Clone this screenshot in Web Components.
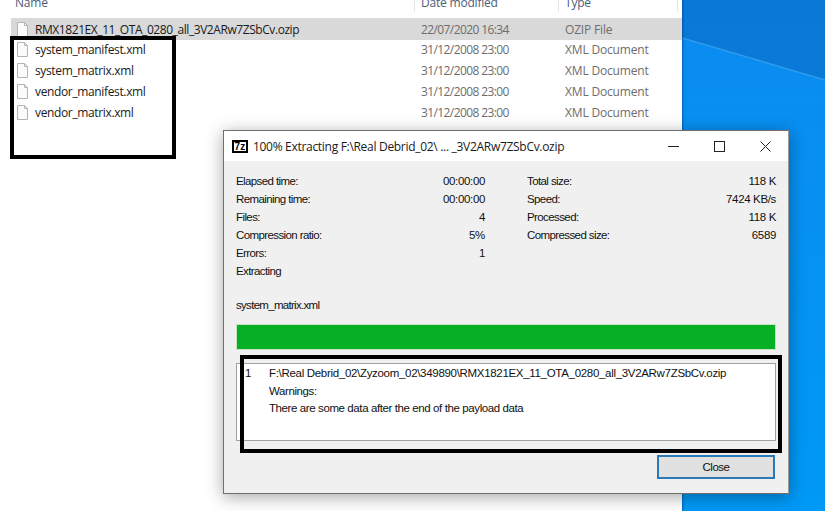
<!DOCTYPE html>
<html>
<head>
<meta charset="utf-8">
<title>Extracting</title>
<style>
html, body { margin: 0; padding: 0; background: #0078d7; }
</style>
</head>
<body>
<win-desktop>
  <explorer-list>
    <file-row name="RMX1821EX_11_OTA_0280_all_3V2ARw7ZSbCv.ozip" date="22/07/2020 16:34" type="OZIP File" selected></file-row>
    <file-row name="system_manifest.xml" date="31/12/2008 23:00" type="XML Document"></file-row>
    <file-row name="system_matrix.xml" date="31/12/2008 23:00" type="XML Document"></file-row>
    <file-row name="vendor_manifest.xml" date="31/12/2008 23:00" type="XML Document"></file-row>
    <file-row name="vendor_matrix.xml" date="31/12/2008 23:00" type="XML Document"></file-row>
  </explorer-list>
  <mark-box style="left:10px;top:36px;width:166px;height:123px"></mark-box>
  <zip-dialog>
    <stat-row slot="left" label="Elapsed time:" value="00:00:00"></stat-row>
    <stat-row slot="left" label="Remaining time:" value="00:00:00"></stat-row>
    <stat-row slot="left" label="Files:" value="4"></stat-row>
    <stat-row slot="left" label="Compression ratio:" value="5%"></stat-row>
    <stat-row slot="left" label="Errors:" value="1"></stat-row>
    <stat-row slot="left" label="Extracting" value=""></stat-row>
    <stat-row slot="right" label="Total size:" value="118 K"></stat-row>
    <stat-row slot="right" label="Speed:" value="7424 KB/s"></stat-row>
    <stat-row slot="right" label="Processed:" value="118 K"></stat-row>
    <stat-row slot="right" label="Compressed size:" value="6589"></stat-row>
  </zip-dialog>
  <mark-box style="left:240px;top:355px;width:542px;height:98px"></mark-box>
</win-desktop>

<script>
const UI_FONT = '"Open Sans", "Noto Sans", sans-serif';
const DLG_FONT = '"Liberation Sans", Arial, sans-serif';

class WinDesktop extends HTMLElement {
  constructor() {
    super();
    this.attachShadow({ mode: "open" });
    this.shadowRoot.innerHTML = `
      <style>
      :host {
        display: block;
        position: relative;
        width: 825px;
        height: 511px;
        overflow: hidden;
        background: linear-gradient(180deg, #0a78d6 0%, #0880e0 100%);
      }
      svg { position: absolute; left: 682px; top: 0; }
      </style>
      <svg width="143" height="511" viewBox="0 0 143 511">
        <defs>
          <linearGradient id="lower" x1="0" y1="0" x2="0" y2="1">
            <stop offset="0" stop-color="#0a8cf0"/>
            <stop offset="1" stop-color="#0099f6"/>
          </linearGradient>
        </defs>
        <polygon points="0,38 143,80 143,511 0,511" fill="url(#lower)"/>
        <line x1="0" y1="38" x2="143" y2="80" stroke="#2f9cec" stroke-width="1.4"/>
      </svg>
      <slot></slot>
    `;
  }
}

class ExplorerList extends HTMLElement {
  constructor() {
    super();
    this.attachShadow({ mode: "open" });
    this.shadowRoot.innerHTML = `
      <style>
      :host {
        display: block;
        position: absolute;
        left: 0;
        top: 0;
        width: 682px;
        height: 511px;
        background: #fff;
        box-shadow: 1px 0 2px rgba(0,40,90,.45);
        font: 12px ${UI_FONT};
      }
      .head {
        display: grid;
        grid-template-columns: 415px 144px 119px;
        height: 18px;
        box-sizing: border-box;
        color: #4c607a;
      }
      .head span {
        height: 12px;
        line-height: 6px;
        padding-left: 6px;
        border-right: 1px solid #e5e5e5;
        letter-spacing: -.2px;
      }
      .head span:first-child { padding-left: 15px; }
      </style>
      <div class="head"><span>Name</span><span>Date modified</span><span>Type</span></div>
      <slot></slot>
    `;
  }
}

class FileRow extends HTMLElement {
  constructor() {
    super();
    this.attachShadow({ mode: "open" });
    this.shadowRoot.innerHTML = `
      <style>
      :host {
        display: grid;
        grid-template-columns: 404px 144px 1fr;
        align-items: center;
        height: 21px;
        margin-left: 11px;
      }
      :host([selected]) { background: #d9d9d9; height: 22px; margin-bottom: -1px; }
      :host([selected]) .name { letter-spacing: -.43px; }
      .name { display: flex; align-items: center; gap: 7px; padding-left: 6px; color: #1a1a1a; letter-spacing: -.36px; }
      .muted { color: #6d6d6d; padding-left: 6px; letter-spacing: -.17px; }
      .date { letter-spacing: -.6px; }
      svg { flex: none; }
      </style>
      <div class="name">
        <svg width="11" height="15" viewBox="0 0 11 15">
          <path d="M.5.5h7l3 3v11H.5z" fill="#fbfbfb" stroke="#b4b4b4"/>
          <path d="M7.5.5v3h3" fill="none" stroke="#b4b4b4"/>
        </svg>
        <span id="n"></span>
      </div>
      <div class="muted date" id="d"></div>
      <div class="muted" id="t"></div>
    `;
    this.shadowRoot.querySelector("#n").textContent = this.getAttribute("name");
    this.shadowRoot.querySelector("#d").textContent = this.getAttribute("date");
    this.shadowRoot.querySelector("#t").textContent = this.getAttribute("type");
  }
}

class StatRow extends HTMLElement {
  constructor() {
    super();
    this.attachShadow({ mode: "open" });
    this.shadowRoot.innerHTML = `
      <style>
      :host {
        display: flex;
        justify-content: space-between;
        height: 18px;
        line-height: 18px;
      }
      #v { letter-spacing: -.35px; }
      </style>
      <span id="l"></span><span id="v"></span>
    `;
    this.shadowRoot.querySelector("#l").textContent = this.getAttribute("label");
    this.shadowRoot.querySelector("#v").textContent = this.getAttribute("value");
  }
}

const dialogTemplate = document.createElement("template");
dialogTemplate.innerHTML = `
  <style>
  :host {
    display: block;
    position: absolute;
    left: 223px;
    top: 130px;
    width: 566px;
    height: 364px;
    box-sizing: border-box;
    border: 1px solid #6f6f6f;
    border-right-color: #9a9a9a;
    background: #f0f0f0;
    box-shadow: 0 3px 16px rgba(0,0,0,.35);
    font: 11.5px ${DLG_FONT};
    letter-spacing: -.4px;
    color: #111;
  }
  .title {
    display: flex;
    align-items: center;
    height: 30px;
    background: #fff;
    padding-left: 8px;
    font: 12px ${UI_FONT};
    letter-spacing: -.3px;
    color: #1a1a1a;
  }
  .logo {
    width: 16px;
    height: 13px;
    box-sizing: border-box;
    border: 2px solid #000;
    margin-right: 5px;
    background: #fff;
    color: #000;
    text-align: center;
    font: bold 10px/9px "Liberation Sans", sans-serif;
    letter-spacing: .3px;
  }
  .caption { flex: 1; }
  .controls { display: flex; align-items: center; gap: 35px; padding-right: 17px; }
  .body { padding: 11px 12px 0 12px; }
  .stats { display: grid; grid-template-columns: 249px 249px; column-gap: 42px; height: 124px; letter-spacing: -.6px; }
  .current { height: 18px; line-height: 18px; letter-spacing: -.7px; }
  .bar {
    height: 26px;
    margin-top: 10px;
    box-sizing: border-box;
    border: 1px solid #c6e3c6;
    background: #06b025;
  }
  .log {
    height: 78px;
    margin-top: 13px;
    box-sizing: border-box;
    border: 1px solid #a0a0a0;
    background: #fff;
    padding: 1px 0 0 8px;
    display: grid;
    grid-template-columns: 24px 1fr;
    grid-auto-rows: 17.5px;
    line-height: 17.5px;
  }
  .path { letter-spacing: -.31px; }
  .foot { display: flex; justify-content: flex-end; padding-top: 14px; }
  button {
    width: 118px;
    height: 24px;
    margin-right: 1px;
    box-sizing: border-box;
    border: 2px solid #2b78b4;
    background: #e1e1e1;
    font: inherit;
    letter-spacing: -.5px;
    color: #111;
    padding: 0 0 1px;
  }
  </style>
  <div class="title">
    <div class="logo">7z</div>
    <div class="caption">100% Extracting F:\\Real Debrid_02\\ ... _3V2ARw7ZSbCv.ozip</div>
    <div class="controls">
      <svg width="11" height="11" viewBox="0 0 11 11"><path d="M0 5.5h11" stroke="#222"/></svg>
      <svg width="11" height="11" viewBox="0 0 11 11"><rect x=".5" y=".5" width="10" height="10" fill="none" stroke="#222"/></svg>
      <svg width="11" height="11" viewBox="0 0 11 11"><path d="M.5.5l10 10M10.5.5l-10 10" stroke="#222" fill="none"/></svg>
    </div>
  </div>
  <div class="body">
    <div class="stats">
      <div><slot name="left"></slot></div>
      <div><slot name="right"></slot></div>
    </div>
    <div class="current">system_matrix.xml</div>
    <div class="bar"></div>
    <div class="log">
      <span>1</span><span class="path">F:\\Real Debrid_02\\Zyzoom_02\\349890\\RMX1821EX_11_OTA_0280_all_3V2ARw7ZSbCv.ozip</span>
      <span></span><span>Warnings:</span>
      <span></span><span>There are some data after the end of the payload data</span>
    </div>
    <div class="foot"><button>Close</button></div>
  </div>
`;

class ZipDialog extends HTMLElement {
  constructor() {
    super();
    this.attachShadow({ mode: "open" });
    this.shadowRoot.appendChild(dialogTemplate.content.cloneNode(true));
  }
}

class MarkBox extends HTMLElement {
  constructor() {
    super();
    this.attachShadow({ mode: "open" });
    this.shadowRoot.innerHTML = `
      <style>
      :host {
        display: block;
        position: absolute;
        box-sizing: border-box;
        border: 4px solid #000;
        pointer-events: none;
      }
      </style>
    `;
  }
}

customElements.define("win-desktop", WinDesktop);
customElements.define("explorer-list", ExplorerList);
customElements.define("file-row", FileRow);
customElements.define("stat-row", StatRow);
customElements.define("zip-dialog", ZipDialog);
customElements.define("mark-box", MarkBox);
</script>
</body>
</html>
